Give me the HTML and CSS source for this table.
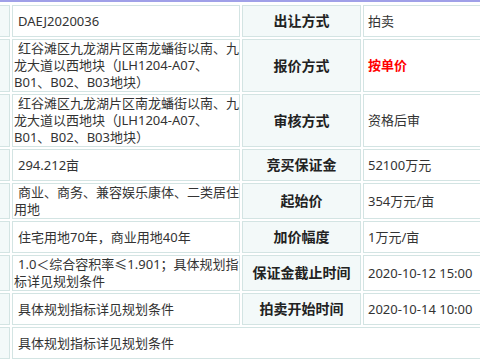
FILE: index.html
```html
<!DOCTYPE html>
<html lang="zh-CN">
<head>
<meta charset="utf-8">
<title>地块信息</title>
<link rel="stylesheet" href="styles.css">
</head>
<body>
<div class="topbar"></div>
<table class="info">
  <tbody>
    <tr>
      <td class="side c0"></td>
      <td class="val c1 ind">DAEJ2020036</td>
      <th class="lbl c2">出让方式</th>
      <td class="val2 c3">拍卖</td>
    </tr>
    <tr>
      <td class="side"></td>
      <td class="val ind">红谷滩区九龙湖片区南龙蟠街以南、九<br>龙大道以西地块（JLH1204-A07、<br>B01、B02、B03地块）</td>
      <th class="lbl">报价方式</th>
      <td class="val2 red">按单价</td>
    </tr>
    <tr>
      <td class="side"></td>
      <td class="val ind">红谷滩区九龙湖片区南龙蟠街以南、九<br>龙大道以西地块（JLH1204-A07、<br>B01、B02、B03地块）</td>
      <th class="lbl">审核方式</th>
      <td class="val2">资格后审</td>
    </tr>
    <tr>
      <td class="side"></td>
      <td class="val ind">294.212亩</td>
      <th class="lbl">竞买保证金</th>
      <td class="val2">52100万元</td>
    </tr>
    <tr>
      <td class="side"></td>
      <td class="val ind">商业、商务、兼容娱乐康体、二类居住<br>用地</td>
      <th class="lbl">起始价</th>
      <td class="val2">354万元/亩</td>
    </tr>
    <tr>
      <td class="side"></td>
      <td class="val ind">住宅用地70年，商业用地40年</td>
      <th class="lbl">加价幅度</th>
      <td class="val2">1万元/亩</td>
    </tr>
    <tr>
      <td class="side"></td>
      <td class="val ind">1.0＜综合容积率≤1.901；具体规划指<br>标详见规划条件</td>
      <th class="lbl">保证金截止时间</th>
      <td class="val2">2020-10-12 15:00</td>
    </tr>
    <tr>
      <td class="side"></td>
      <td class="val ind">具体规划指标详见规划条件</td>
      <th class="lbl">拍卖开始时间</th>
      <td class="val2">2020-10-14 10:00</td>
    </tr>
    <tr class="last">
      <td class="side"></td>
      <td class="val ind" colspan="3">具体规划指标详见规划条件</td>
    </tr>
  </tbody>
</table>
</body>
</html>
```

FILE: styles.css
```css
html, body {
  margin: 0;
  padding: 0;
  background: #ffffff;
  overflow: hidden;
}

body {
  font-family: "Noto Sans", "Noto Sans CJK SC", sans-serif;
  font-size: 13px;
  color: #333333;
}

.topbar {
  height: 2px;
  background: #a0a0e8;
}

.info {
  margin-top: 1px;
  margin-left: -30px;
  border-collapse: separate;
  border-spacing: 2px;
  table-layout: fixed;
  width: 553px;
}

.info td,
.info th {
  box-sizing: border-box;
  border: 1px solid #d3e4e3;
  vertical-align: middle;
}

.c0 { width: 38px; }
.c1 { width: 228px; }
.c2 { width: 119px; }
.c3 { width: 160px; }

.side {
  background: #f3f9f9;
}

.val {
  background: #ffffff;
  padding: 0 0 0 1px;
  line-height: 17px;
  text-align: left;
  white-space: nowrap;
}

.ind {
  text-indent: 4px;
}

.lbl {
  background: #f3f9f9;
  padding: 6px 0;
  line-height: 18px;
  font-size: 14px;
  font-weight: bold;
  color: #222222;
  text-align: center;
  white-space: nowrap;
}

.val2 {
  background: #ffffff;
  padding: 0 0 0 4px;
  line-height: 17px;
  text-align: left;
  white-space: nowrap;
}

.red {
  color: #ff0000;
  font-weight: bold;
}

.last td {
  height: 32px;
}
```
